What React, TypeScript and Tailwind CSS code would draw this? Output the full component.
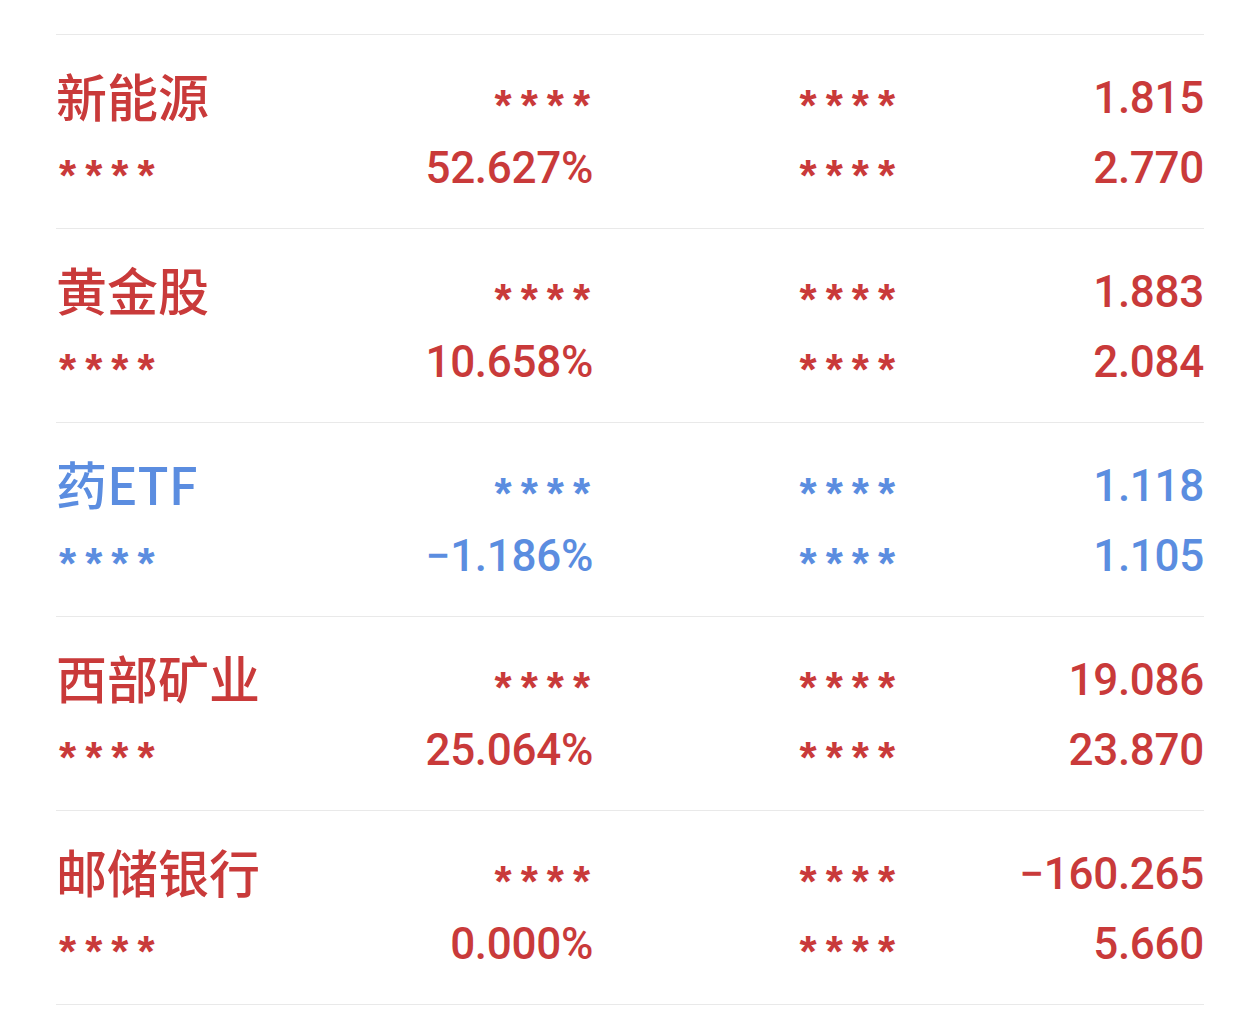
const RED = "text-[#c93a3a]";
const BLUE = "text-[#5b8de0]";

type Holding = {
  name: string;
  rate: string;
  price: string;
  cost: string;
  up: boolean;
};

const holdings: Holding[] = [
  { name: "新能源", rate: "52.627%", price: "1.815", cost: "2.770", up: true },
  { name: "黄金股", rate: "10.658%", price: "1.883", cost: "2.084", up: true },
  { name: "药ETF", rate: "−1.186%", price: "1.118", cost: "1.105", up: false },
  { name: "西部矿业", rate: "25.064%", price: "19.086", cost: "23.870", up: true },
  { name: "邮储银行", rate: "0.000%", price: "−160.265", cost: "5.660", up: true },
];

function Stars() {
  return (
    <div className="flex gap-[9px] items-center h-[70px]">
      {[0, 1, 2, 3].map((i) => (
        <span
          key={i}
          className="text-[44px] font-bold leading-none relative top-[8px] font-['Liberation_Sans',sans-serif]"
        >
          *
        </span>
      ))}
    </div>
  );
}

function Row({ h }: { h: Holding }) {
  const color = h.up ? RED : BLUE;
  const num = "font-['Roboto',sans-serif] font-medium text-[44px] leading-[70px] tracking-[-0.3px]";
  return (
    <div className={`border-t border-[#e9e9e9] pt-[28px] pb-[25px] ${color}`}>
      <div className="grid grid-cols-[287px_250px_302px_309px]">
        <div className="h-[70px] flex items-center">
          <span className="font-['Noto_Sans_CJK_SC',sans-serif] font-medium text-[51px] leading-none relative top-[-3px]">{h.name}</span>
        </div>
        <div className="flex justify-end pr-[3px]">
          <Stars />
        </div>
        <div className="flex justify-end">
          <Stars />
        </div>
        <div className={`text-right ${num}`}>{h.price}</div>

        <div className="flex justify-start pl-[3px]">
          <Stars />
        </div>
        <div className={`text-right ${num}`}>{h.rate}</div>
        <div className="flex justify-end">
          <Stars />
        </div>
        <div className={`text-right ${num}`}>{h.cost}</div>
      </div>
    </div>
  );
}

export default function App() {
  return (
    <div className="w-[1260px] h-[1027px] bg-white pt-[34px] px-[56px]">
      {holdings.map((h, i) => (
        <Row key={i} h={h} />
      ))}
      <div className="border-t border-[#e9e9e9]" />
    </div>
  );
}
